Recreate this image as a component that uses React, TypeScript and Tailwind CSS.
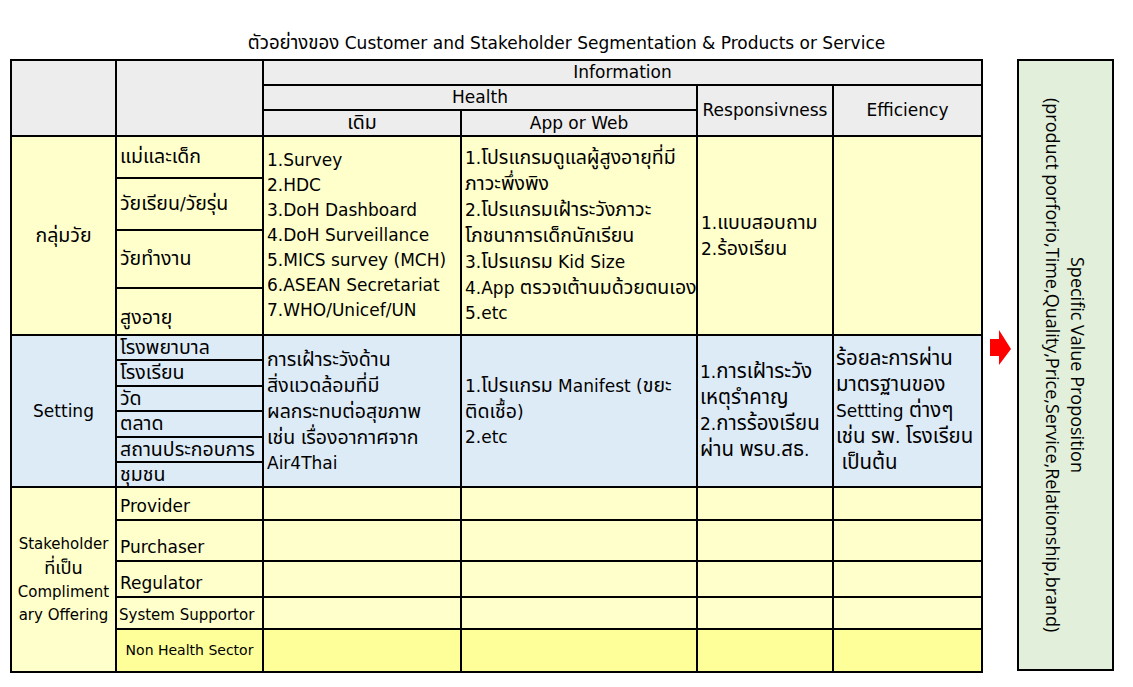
import React from "react";

const B = "border-2 border-black";
const TH = "border-2 border-black bg-[#ededed] text-center align-middle font-normal p-0 leading-[21px] text-[17px]";
const Y = "bg-[#ffffcc]";
const BL = "bg-[#ddebf7]";
const HY = "bg-[#ffff99]";

function T({ s, c = "text-[1.15em]" }: { s: string; c?: string }) {
  const parts = s.split(/([\u0E00-\u0E7F]+)/);
  return (
    <>
      {parts.map((p, i) =>
        /[\u0E00-\u0E7F]/.test(p) ? (
          <span key={i} className={c}>
            {p}
          </span>
        ) : (
          <React.Fragment key={i}>{p}</React.Fragment>
        )
      )}
    </>
  );
}

function Lines({ l, c }: { l: string[]; c?: string }) {
  return (
    <>
      {l.map((s, i) => (
        <React.Fragment key={i}>
          {i > 0 && <br />}
          <T s={s} c={c} />
        </React.Fragment>
      ))}
    </>
  );
}

function EmptyCells({ bg }: { bg: string }) {
  return (
    <>
      <td className={`${B} ${bg}`}></td>
      <td className={`${B} ${bg}`}></td>
      <td className={`${B} ${bg}`}></td>
      <td className={`${B} ${bg}`}></td>
    </>
  );
}

const SL = `${B} ${BL} px-[3px] py-0 leading-[21px] align-middle whitespace-nowrap overflow-hidden`;

export default function App() {
  return (
    <div
      className="w-[1133px] h-[687px] bg-white text-black overflow-hidden"
      style={{ fontFamily: '"DejaVu Sans", "Noto Sans Thai", Tahoma, sans-serif' }}
    >
      <div className="h-[59px] flex items-end justify-center pb-[5px] text-[17px] leading-[22px] whitespace-nowrap">
        <span>
          <T s="ตัวอย่างของ Customer and Stakeholder Segmentation & Products or Service" c="text-[1.1em]" />
        </span>
      </div>
      <div className="flex items-start pl-[10px]">
        <table className="border-collapse table-fixed w-[971px] text-[17px] leading-[25px]">
          <colgroup>
            <col className="w-[105px]" />
            <col className="w-[147px]" />
            <col className="w-[198px]" />
            <col className="w-[236px]" />
            <col className="w-[136px]" />
            <col className="w-[149px]" />
          </colgroup>
          <thead>
            <tr className="h-[25px]">
              <th rowSpan={3} className={TH}></th>
              <th rowSpan={3} className={TH}></th>
              <th colSpan={4} className={TH}>Information</th>
            </tr>
            <tr className="h-[25px]">
              <th colSpan={2} className={TH}>Health</th>
              <th rowSpan={2} className={TH}>Responsivness</th>
              <th rowSpan={2} className={TH}>Efficiency</th>
            </tr>
            <tr className="h-[26px]">
              <th className={TH}>
                <T s="เดิม" c="text-[1.15em]" />
              </th>
              <th className={TH}>App or Web</th>
            </tr>
          </thead>
          <tbody>
            {/* กลุ่มวัย */}
            <tr className="h-[42px]">
              <td rowSpan={4} className={`${B} ${Y} text-center align-middle`}>
                <T s="กลุ่มวัย" />
              </td>
              <td className={`${B} ${Y} px-[3px] align-middle`}>
                <T s="แม่และเด็ก" />
              </td>
              <td rowSpan={4} className={`${B} ${Y} px-[3px] align-middle whitespace-nowrap overflow-hidden`}>
                <Lines
                  l={[
                    "1.Survey",
                    "2.HDC",
                    "3.DoH Dashboard",
                    "4.DoH Surveillance",
                    "5.MICS survey (MCH)",
                    "6.ASEAN Secretariat",
                    "7.WHO/Unicef/UN",
                  ]}
                />
              </td>
              <td rowSpan={4} className={`${B} ${Y} px-[3px] align-middle whitespace-nowrap overflow-hidden`}>
                <Lines
                  l={[
                    "1.โปรแกรมดูแลผู้สูงอายุที่มี",
                    "ภาวะพึ่งพิง",
                    "2.โปรแกรมเฝ้าระวังภาวะ",
                    "โภชนาการเด็กนักเรียน",
                    "3.โปรแกรม Kid Size",
                    "4.App ตรวจเต้านมด้วยตนเอง",
                    "5.etc",
                  ]}
                />
              </td>
              <td rowSpan={4} className={`${B} ${Y} px-[3px] align-middle whitespace-nowrap`}>
                <Lines l={["1.แบบสอบถาม", "2.ร้องเรียน"]} />
              </td>
              <td rowSpan={4} className={`${B} ${Y}`}></td>
            </tr>
            <tr className="h-[52px]">
              <td className={`${B} ${Y} px-[3px] align-middle`}>
                <T s="วัยเรียน/วัยรุ่น" />
              </td>
            </tr>
            <tr className="h-[58px]">
              <td className={`${B} ${Y} px-[3px] align-middle`}>
                <T s="วัยทำงาน" />
              </td>
            </tr>
            <tr className="h-[47px]">
              <td className={`${B} ${Y} px-[3px] align-bottom pb-[3px]`}>
                <T s="สูงอายุ" />
              </td>
            </tr>

            {/* Setting */}
            <tr className="h-[25px]">
              <td rowSpan={6} className={`${B} ${BL} text-center align-middle`}>Setting</td>
              <td className={SL}>
                <T s="โรงพยาบาล" />
              </td>
              <td rowSpan={6} className={`${B} ${BL} px-[3px] align-middle whitespace-nowrap`}>
                <Lines
                  l={["การเฝ้าระวังด้าน", "สิ่งแวดล้อมที่มี", "ผลกระทบต่อสุขภาพ", "เช่น เรื่องอากาศจาก", "Air4Thai"]}
                />
              </td>
              <td rowSpan={6} className={`${B} ${BL} px-[3px] align-middle whitespace-nowrap overflow-hidden`}>
                <Lines l={["1.โปรแกรม Manifest (ขยะ", "ติดเชื้อ)", "2.etc"]} />
              </td>
              <td rowSpan={6} className={`${B} ${BL} px-[2px] align-middle whitespace-nowrap overflow-hidden`}>
                <Lines l={["1.การเฝ้าระวัง", "เหตุรำคาญ", "2.การร้องเรียน", "ผ่าน พรบ.สธ."]} c="text-[1.2em]" />
              </td>
              <td rowSpan={6} className={`${B} ${BL} px-[2px] align-middle whitespace-nowrap overflow-hidden`}>
                <Lines
                  l={["ร้อยละการผ่าน", "มาตรฐานของ", "Settting ต่างๆ", "เช่น รพ. โรงเรียน", "\u00a0เป็นต้น"]}
                  c="text-[1.2em]"
                />
              </td>
            </tr>
            <tr className="h-[26px]">
              <td className={SL}>
                <T s="โรงเรียน" />
              </td>
            </tr>
            <tr className="h-[25px]">
              <td className={SL}>
                <T s="วัด" />
              </td>
            </tr>
            <tr className="h-[26px]">
              <td className={SL}>
                <T s="ตลาด" />
              </td>
            </tr>
            <tr className="h-[25px]">
              <td className={SL}>
                <T s="สถานประกอบการ" />
              </td>
            </tr>
            <tr className="h-[25px]">
              <td className={SL}>
                <T s="ชุมชน" />
              </td>
            </tr>

            {/* Stakeholder */}
            <tr className="h-[33px]">
              <td rowSpan={5} className={`${B} ${Y} text-center align-middle text-[15px] leading-[23px] px-0`}>
                <Lines l={["Stakeholder", "ที่เป็น", "Compliment", "ary Offering"]} c="text-[1.22em]" />
              </td>
              <td className={`${B} ${Y} px-[3px] align-bottom`}>Provider</td>
              <EmptyCells bg={Y} />
            </tr>
            <tr className="h-[41px]">
              <td className={`${B} ${Y} px-[3px] align-bottom`}>Purchaser</td>
              <EmptyCells bg={Y} />
            </tr>
            <tr className="h-[36px]">
              <td className={`${B} ${Y} px-[3px] align-bottom`}>Regulator</td>
              <EmptyCells bg={Y} />
            </tr>
            <tr className="h-[32px]">
              <td className={`${B} ${Y} px-[2px] align-bottom whitespace-nowrap text-[15px]`}>System Supportor</td>
              <EmptyCells bg={Y} />
            </tr>
            <tr className="h-[43px]">
              <td className={`${B} ${HY} text-center align-middle text-[14px] whitespace-nowrap`}>Non Health Sector</td>
              <EmptyCells bg={HY} />
            </tr>
          </tbody>
        </table>

        <div className="w-[34px] pt-[271px] pl-[7px]">
          <svg className="block" width="21" height="35" viewBox="0 0 21 35">
            <polygon points="0,9 9,9 9,0 21,19 9,35 9,26 0,26" fill="#ff0000" />
          </svg>
        </div>

        <div
          className="w-[97px] h-[612px] border-2 border-black bg-[#e2efda] flex items-center justify-center pr-[1px]"
          style={{ fontFamily: '"Open Sans", "Noto Sans", sans-serif' }}
        >
          <div className="[writing-mode:vertical-rl] text-center text-[18px] leading-[25px] whitespace-nowrap">
            Specific Value Proposition
            <br />
            (product porforio,Time,Quality,Price,Service,Relationship,brand)
          </div>
        </div>
      </div>
    </div>
  );
}
